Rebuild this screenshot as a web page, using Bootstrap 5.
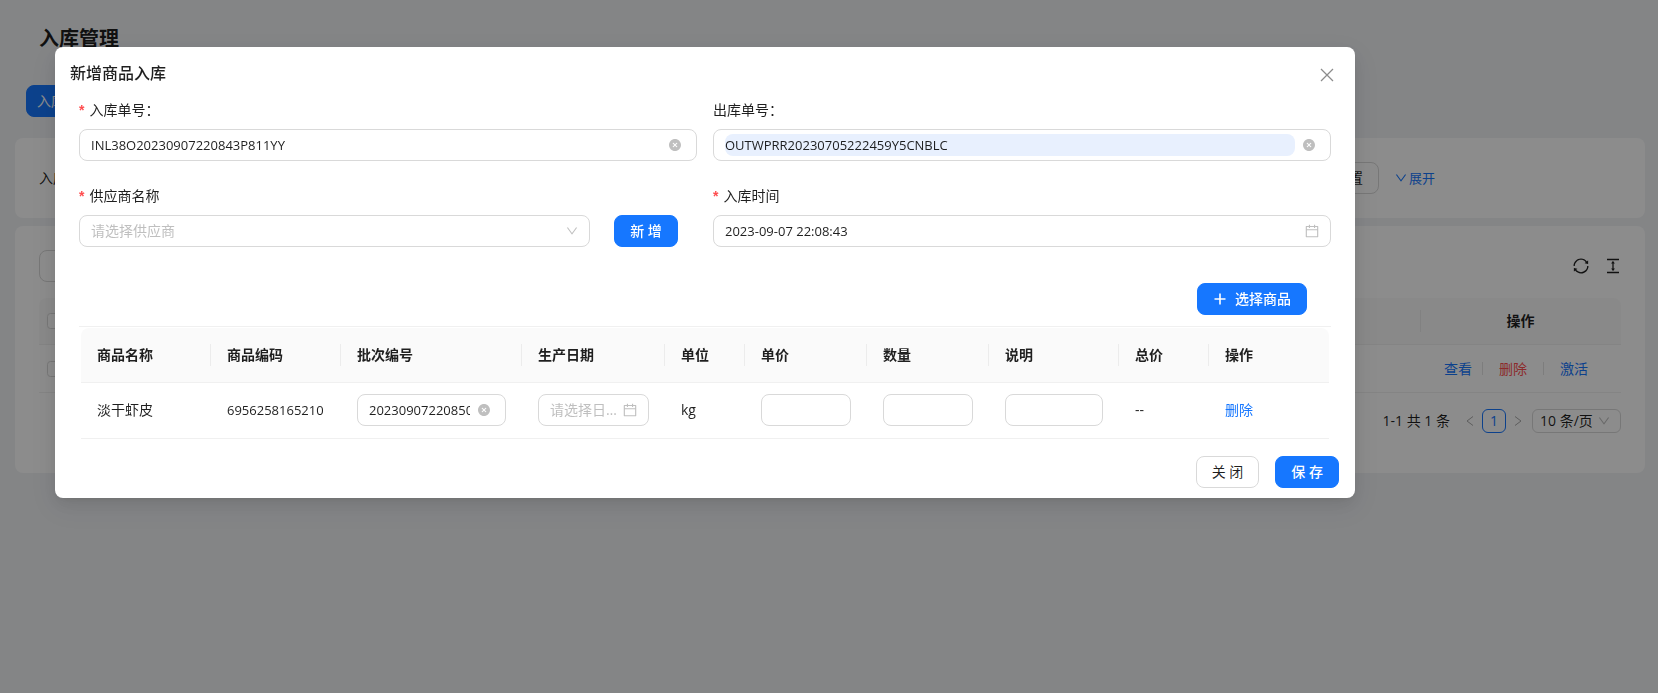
<!DOCTYPE html>
<html lang="zh-CN">
<head>
<meta charset="utf-8">
<meta name="viewport" content="width=device-width, initial-scale=1">
<title>入库管理</title>
<link href="https://cdn.jsdelivr.net/npm/bootstrap@5.3.0/dist/css/bootstrap.min.css" rel="stylesheet">
<style>
:root { --brand: #1677ff; --line: #d9d9d9; --soft: #f0f0f0; --ink: rgba(0,0,0,.88); --muted: rgba(0,0,0,.25); }
body { font-family: "Open Sans", "Noto Sans CJK SC", sans-serif; font-size: 14px; line-height: 22px; color: var(--ink); background: #f0f2f5; min-height: 100vh; overflow: hidden; }
svg { display: block; flex: none; fill: currentColor; }
a { color: var(--brand); text-decoration: none; }
.btn { font-size: 14px; line-height: 22px; padding: 4px 15px; height: 32px; border-radius: 8px; }
.btn-primary { --bs-btn-bg: #1677ff; --bs-btn-border-color: #1677ff; --bs-btn-hover-bg: #4096ff; --bs-btn-hover-border-color: #4096ff; }
.btn-plain { border: 1px solid var(--line); background: #fff; color: var(--ink); }
.solid { font-weight: 500; }

.page-area { padding: 28px 13px 0 15px; }
.page-title { font-size: 20px; line-height: 22px; font-weight: 600; margin: 0 24px; }
.tab-row { padding: 35px 11px 21px; }
.tab-row .btn { padding: 4px 10px; }
.panel { background: #fff; border-radius: 8px; padding: 24px; }
.panel + .panel { margin-top: 8px; }
.search-tail { gap: 16px; margin-right: 186px; }
.search-tail a { font-size: 13px; gap: 2px; }
.list-panel { padding-bottom: 40px; }
.tools { gap: 16px; }
.list-table { width: 100%; margin: 16px 0; table-layout: fixed; border-collapse: separate; border-spacing: 0; }
.list-table th { background: #fafafa; height: 47px; font-weight: 600; text-align: center; border-bottom: 1px solid var(--soft); padding: 0 8px; }
.list-table th:first-child { border-top-left-radius: 8px; }
.list-table th:last-child { border-top-right-radius: 8px; background: linear-gradient(#ececec, #ececec) left center / 1px 22px no-repeat #fafafa; }
.list-table td { height: 48px; border-bottom: 1px solid var(--soft); padding: 0 8px; }
.form-check-input { display: block; width: 16px; height: 16px; margin: 0; border-radius: 2px; border-color: var(--line); }
.row-links { padding-left: 16px; }
.row-links i { width: 1px; height: 13px; margin: 0 16px; background: #e4e4e4; }
.row-links i:first-of-type { margin-left: 10px; }
.danger-link { color: #ff4d4f; }
.pager { gap: 6px; }
.page-no { width: 24px; height: 24px; border: 1px solid var(--brand); border-radius: 6px; line-height: 22px; text-align: center; }
.size-box { position: relative; width: 89px; margin-left: 2px; }
.size-box select { appearance: none; display: block; width: 100%; height: 24px; padding: 0 7px; border: 1px solid var(--line); border-radius: 6px; background: #fff; color: var(--ink); line-height: 22px; }
.size-box svg { position: absolute; right: 11px; top: 6px; color: #bfbfbf; }

.modal-backdrop { --bs-backdrop-opacity: .45; }
.modal-dialog { max-width: 1300px; margin: 47px 0 0 55px; }
.modal-content { border: 0; border-radius: 8px; color: var(--ink); box-shadow: 0 6px 16px rgba(0,0,0,.08), 0 3px 6px -4px rgba(0,0,0,.12), 0 9px 28px 8px rgba(0,0,0,.05); }
.modal-header { border: 0; padding: 15px 20px 0 15px; height: 52px; align-items: flex-start; }
.modal-title { font-size: 16px; line-height: 22px; font-weight: 500; }
.close-btn { border: 0; background: none; padding: 5px 0 0; color: rgba(0,0,0,.45); }
.modal-body { padding: 0 24px; }
.modal-footer { border: 0; padding: 17px 16px 10px; gap: 16px; }
.modal-footer > * { margin: 0; }
.form-grid { display: grid; grid-template-columns: 1fr 1fr; gap: 24px 16px; }
.form-grid label { display: block; line-height: 22px; margin-bottom: 8px; }
.need::before { content: "*"; color: #ff4d4f; margin-right: 5px; font-family: "Liberation Sans", sans-serif; font-weight: 700; }
.field { display: flex; align-items: center; height: 32px; border: 1px solid var(--line); border-radius: 8px; background: #fff; padding: 0 11px; color: var(--muted); }
.field input, .field select { flex: 1; min-width: 0; width: 100%; height: 22px; border: 0; padding: 0; background: none; color: var(--ink); font-size: 13px; line-height: 22px; outline: 0; appearance: none; border-radius: 8px; text-overflow: ellipsis; }
.field select, .field input::placeholder { font-size: 14px; color: #bfbfbf; opacity: 1; }
.field .filled { background: #e8f0fe; }
.clearable { padding-right: 15px; gap: 8px; }
.clearable input { text-overflow: clip; }
.clearable input:not(.filled) { border-radius: 0; }
.supplier { display: grid; grid-template-columns: 1fr 64px; gap: 24px; margin-right: 19px; }
.pick-row { padding: 36px 24px 11px; }
.goods-wrap { border-top: 1px solid var(--soft); padding: 1px 2px 0; }
.goods { width: 100%; table-layout: fixed; border-collapse: separate; border-spacing: 0; }
.goods th { height: 55px; background: #fafafa; font-weight: 600; padding: 0 16px; border-bottom: 1px solid var(--soft); }
.goods th:first-child { border-top-left-radius: 8px; }
.goods th:last-child { border-top-right-radius: 8px; }
.goods th:not(:last-child) { background: linear-gradient(#ececec, #ececec) right center / 1px 22px no-repeat #fafafa; }
.goods td { height: 56px; padding: 0 16px 1px; border-bottom: 1px solid var(--soft); }
.num { font-size: 13px; }
</style>
</head>
<body>
<svg width="0" height="0" class="position-absolute" aria-hidden="true">
  <symbol id="i-down" viewBox="64 64 896 896"><path d="M884 256h-75c-5.100 0-9.900 2.500-12.900 6.600L512 654.200 227.900 262.600c-3-4.100-7.800-6.600-12.900-6.600h-75c-6.500 0-10.300 7.400-6.500 12.700l352.600 486.100c12.800 17.600 39 17.600 51.700 0l352.600-486.100c3.900-5.300.1-12.700-6.400-12.700z"/></symbol>
  <symbol id="i-clear" viewBox="64 64 896 896"><path fill-rule="evenodd" d="M512 64c247.400 0 448 200.600 448 448S759.400 960 512 960 64 759.400 64 512 264.600 64 512 64zm128 274a8 8 0 0 0-6 3L512 463 391 341a8 8 0 0 0-12 0l-38 38a8 8 0 0 0 0 12l122 121-122 121a8 8 0 0 0 0 12l38 38a8 8 0 0 0 12 0l121-122 121 122a8 8 0 0 0 12 0l38-38a8 8 0 0 0 0-12L561 512l122-121a8 8 0 0 0 0-12l-38-38a8 8 0 0 0-5-3z"/></symbol>
  <symbol id="i-cal" viewBox="64 64 896 896"><path d="M880 184H712v-64c0-4.400-3.600-8-8-8h-56c-4.400 0-8 3.600-8 8v64H384v-64c0-4.400-3.600-8-8-8h-56c-4.400 0-8 3.600-8 8v64H144c-17.700 0-32 14.300-32 32v664c0 17.700 14.300 32 32 32h736c17.700 0 32-14.300 32-32V216c0-17.700-14.300-32-32-32zm-40 656H184V460h656v380zM184 392V256h128v48c0 4.400 3.600 8 8 8h56c4.400 0 8-3.600 8-8v-48h256v48c0 4.400 3.600 8 8 8h56c4.400 0 8-3.600 8-8v-48h128v136H184z"/></symbol>
</svg>

<main class="page-area">
  <h1 class="page-title">入库管理</h1>
  <div class="tab-row d-flex"><button type="button" class="btn btn-primary">入库</button></div>

  <section class="panel d-flex justify-content-between align-items-center">
    <span>入库单号</span>
    <div class="search-tail d-flex align-items-center">
      <button type="button" class="btn btn-plain">重 置</button>
      <a href="#" class="d-flex align-items-center"><svg width="12" height="12"><use href="#i-down"/></svg>展开</a>
    </div>
  </section>

  <section class="panel list-panel">
    <div class="d-flex justify-content-between align-items-center">
      <button type="button" class="btn btn-plain">导 出</button>
      <div class="tools d-flex">
        <svg width="16" height="16" viewBox="64 64 896 896"><path d="M168 504.200c1-43.700 10-86.100 26.900-126 17.300-41 42.100-77.700 73.700-109.400S337 212.300 378 195c42.400-17.900 87.400-27 133.900-27s91.500 9.100 133.800 27A341.500 341.500 0 0 1 755 268.800c9.900 9.900 19.200 20.400 27.800 31.400l-60.200 47a8 8 0 0 0 3 14.100l175.700 43c5 1.200 9.900-2.600 9.900-7.700l.8-180.900c0-6.700-7.700-10.500-12.900-6.300l-56.400 44.100C765.800 155.100 646.200 92 511.800 92 282.700 92 96.300 275.600 92 503.800a8 8 0 0 0 8 8.200h60c4.400 0 7.900-3.500 8-7.800zm756 7.800h-60c-4.400 0-7.900 3.500-8 7.800-1 43.700-10 86.100-26.900 126-17.300 41-42.100 77.800-73.700 109.400A342.450 342.450 0 0 1 512.100 856a342.240 342.240 0 0 1-243.200-100.800c-9.900-9.900-19.200-20.400-27.800-31.400l60.200-47a8 8 0 0 0-3-14.100l-175.700-43c-5-1.200-9.900 2.600-9.900 7.700l-.7 181c0 6.700 7.700 10.500 12.900 6.300l56.400-44.100C258.200 868.900 377.800 932 512.200 932c229.200 0 415.500-183.700 419.800-411.800a8 8 0 0 0-8-8.200z"/></svg>
        <svg width="16" height="16" viewBox="64 64 896 896"><path d="M840 836H184c-4.400 0-8 3.600-8 8v60c0 4.400 3.600 8 8 8h656c4.400 0 8-3.600 8-8v-60c0-4.400-3.600-8-8-8zm0-724H184c-4.400 0-8 3.600-8 8v60c0 4.400 3.600 8 8 8h656c4.400 0 8-3.600 8-8v-60c0-4.400-3.600-8-8-8zM610.800 378c6 0 9.400-7 5.700-11.700L515.700 238.700a7.140 7.140 0 0 0-11.300 0L403.600 366.300a7.230 7.230 0 0 0 5.700 11.700H476v268h-62.800c-6 0-9.400 7-5.700 11.700l100.800 127.500c2.900 3.700 8.500 3.700 11.300 0l100.800-127.500c3.700-4.700.4-11.700-5.700-11.700H548V378h62.800z"/></svg>
      </div>
    </div>
    <table class="list-table">
      <colgroup><col style="width:32px"><col><col style="width:201px"></colgroup>
      <thead><tr><th><input class="form-check-input" type="checkbox" aria-label="全选"></th><th></th><th>操作</th></tr></thead>
      <tbody><tr><td><input class="form-check-input" type="checkbox" aria-label="选择行"></td><td></td>
        <td><div class="row-links d-flex align-items-center"><a href="#">查看</a><i></i><a href="#" class="danger-link">删除</a><i></i><a href="#">激活</a></div></td></tr></tbody>
    </table>
    <div class="pager d-flex justify-content-end align-items-center">
      <span class="me-2">1-1 共 1 条</span>
      <svg width="12" height="12" viewBox="0 0 12 12" stroke="#aaa"><path d="M9 1.500 3 6l6 4.500" fill="none"/></svg>
      <a href="#" class="page-no">1</a>
      <svg width="12" height="12" viewBox="0 0 12 12" stroke="#aaa"><path d="M3 1.500 9 6l-6 4.500" fill="none"/></svg>
      <div class="size-box"><select aria-label="每页条数"><option>10 条/页</option></select><svg width="12" height="12"><use href="#i-down"/></svg></div>
    </div>
  </section>
</main>

<div class="modal-backdrop show"></div>
<div class="modal d-block" role="dialog" aria-modal="true" aria-labelledby="dlg-title">
  <div class="modal-dialog">
    <form class="modal-content">
      <div class="modal-header d-flex justify-content-between">
        <h2 class="modal-title" id="dlg-title">新增商品入库</h2>
        <button type="button" class="close-btn" aria-label="关闭"><svg width="16" height="16" viewBox="0 0 16 16" stroke="currentColor" stroke-width="1.300"><path d="M2 2l12 12M14 2 2 14"/></svg></button>
      </div>
      <div class="modal-body">
        <div class="form-grid">
          <div>
            <label class="need" for="in-no">入库单号：</label>
            <div class="field clearable"><input id="in-no" value="INL38O20230907220843P811YY"><svg width="12" height="12"><use href="#i-clear"/></svg></div>
          </div>
          <div>
            <label for="out-no">出库单号：</label>
            <div class="field clearable"><input id="out-no" class="filled" value="OUTWPRR20230705222459Y5CNBLC"><svg width="12" height="12"><use href="#i-clear"/></svg></div>
          </div>
          <div>
            <label class="need" for="supplier">供应商名称</label>
            <div class="supplier">
              <div class="field"><select id="supplier"><option>请选择供应商</option></select><svg width="12" height="12"><use href="#i-down"/></svg></div>
              <button type="button" class="btn btn-primary solid">新 增</button>
            </div>
          </div>
          <div>
            <label class="need" for="in-time">入库时间</label>
            <div class="field"><input id="in-time" value="2023-09-07 22:08:43"><svg width="14" height="14"><use href="#i-cal"/></svg></div>
          </div>
        </div>
        <div class="pick-row d-flex justify-content-end">
          <button type="button" class="btn btn-primary solid d-flex align-items-center gap-2"><svg width="14" height="14" viewBox="0 0 14 14" stroke="currentColor" stroke-width="1.600"><path d="M7 1.500v11M1.500 7h11"/></svg>选择商品</button>
        </div>
        <div class="goods-wrap">
          <table class="goods">
            <colgroup><col style="width:130px"><col style="width:130px"><col style="width:181px"><col style="width:143px"><col style="width:80px"><col style="width:122px"><col style="width:122px"><col style="width:130px"><col style="width:90px"><col></colgroup>
            <thead><tr><th>商品名称</th><th>商品编码</th><th>批次编号</th><th>生产日期</th><th>单位</th><th>单价</th><th>数量</th><th>说明</th><th>总价</th><th>操作</th></tr></thead>
            <tbody><tr>
              <td>淡干虾皮</td>
              <td class="num">6956258165210</td>
              <td><div class="field clearable"><input aria-label="批次编号" value="20230907220850123"><svg width="12" height="12"><use href="#i-clear"/></svg></div></td>
              <td><div class="field"><input aria-label="生产日期" placeholder="请选择日期时间"><svg class="ms-1" width="14" height="14"><use href="#i-cal"/></svg></div></td>
              <td>kg</td>
              <td><div class="field"><input aria-label="单价"></div></td>
              <td><div class="field"><input aria-label="数量"></div></td>
              <td><div class="field"><input aria-label="说明"></div></td>
              <td>--</td>
              <td><a href="#">删除</a></td>
            </tr></tbody>
          </table>
        </div>
      </div>
      <div class="modal-footer">
        <button type="button" class="btn btn-plain">关 闭</button>
        <button type="submit" class="btn btn-primary solid">保 存</button>
      </div>
    </form>
  </div>
</div>
<script src="https://cdn.jsdelivr.net/npm/bootstrap@5.3.0/dist/js/bootstrap.bundle.min.js"></script>
</body>
</html>
